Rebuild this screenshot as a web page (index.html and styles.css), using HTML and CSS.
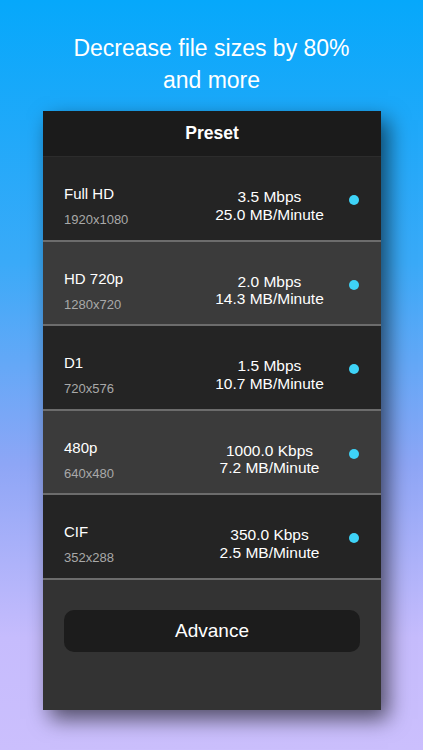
FILE: index.html
```html
<!DOCTYPE html>
<html>
<head>
<meta charset="utf-8">
<link rel="stylesheet" href="styles.css">
</head>
<body>
<div class="screen">
  <h1 class="headline">Decrease file sizes by 80%<br>and more</h1>
  <div class="panel">
    <div class="panel-header">Preset</div>
    <div class="row dark">
      <div class="left"><div class="name">Full HD</div><div class="res">1920x1080</div></div>
      <div class="rate">3.5 Mbps<br>25.0 MB/Minute</div>
      <span class="dot"></span>
    </div>
    <div class="row light">
      <div class="left"><div class="name">HD 720p</div><div class="res">1280x720</div></div>
      <div class="rate">2.0 Mbps<br>14.3 MB/Minute</div>
      <span class="dot"></span>
    </div>
    <div class="row dark">
      <div class="left"><div class="name">D1</div><div class="res">720x576</div></div>
      <div class="rate">1.5 Mbps<br>10.7 MB/Minute</div>
      <span class="dot"></span>
    </div>
    <div class="row light">
      <div class="left"><div class="name">480p</div><div class="res">640x480</div></div>
      <div class="rate">1000.0 Kbps<br>7.2 MB/Minute</div>
      <span class="dot"></span>
    </div>
    <div class="row dark">
      <div class="left"><div class="name">CIF</div><div class="res">352x288</div></div>
      <div class="rate">350.0 Kbps<br>2.5 MB/Minute</div>
      <span class="dot"></span>
    </div>
    <div class="footer">
      <div class="advance">Advance</div>
    </div>
  </div>
</div>
</body>
</html>
```
FILE: styles.css
```css
* { box-sizing: border-box; }
html, body { margin: 0; padding: 0; }
body {
  width: 423px;
  height: 750px;
  overflow: hidden;
  font-family: "Liberation Sans", Arial, sans-serif;
  color: #fff;
}
.screen {
  width: 423px;
  height: 750px;
  background: linear-gradient(180deg, #06a8fb 0%, #3aaaf8 35%, #8ea6f6 62%, #c6bcfd 85%, #cbbffd 100%);
  padding-top: 32px;
  display: flex;
  flex-direction: column;
  align-items: center;
}
.headline {
  margin: 0;
  font-weight: normal;
  font-size: 23px;
  line-height: 32px;
  text-align: center;
}
.panel {
  margin-top: 15px;
  margin-left: 1px;
  width: 338px;
  height: 599px;
  background: #333333;
  box-shadow: 7px 9px 20px rgba(0,0,0,0.6);
  display: flex;
  flex-direction: column;
}
.panel-header {
  height: 46px;
  background: #1b1b1b;
  display: flex;
  align-items: center;
  justify-content: center;
  font-weight: bold;
  font-size: 17.5px;
  border-bottom: 1px solid #2c2c2c;
}
.row {
  height: 84.5px;
  display: flex;
  align-items: flex-start;
  padding-left: 21px;
  padding-top: 28px;
  border-bottom: 2px solid #6c6c6c;
}
.row.dark { background: #242424; }
.row.light { background: #3b3b3b; }
.left { width: 137.5px; }
.name { font-size: 15px; line-height: 18px; }
.res { font-size: 13px; line-height: 16px; color: #a9a9a9; margin-top: 9px; }
.rate {
  width: 136px;
  text-align: center;
  font-size: 15.5px;
  line-height: 17.5px;
  margin-top: 3px;
}
.dot {
  width: 10px;
  height: 10px;
  border-radius: 50%;
  background: #3ed3f7;
  margin-left: 11.5px;
  margin-top: 10px;
}
.footer {
  flex: 1;
  padding: 30px 21px 0 21px;
}
.advance {
  height: 42px;
  border-radius: 10px;
  background: #1c1c1c;
  display: flex;
  align-items: center;
  justify-content: center;
  font-size: 19px;
}
```
